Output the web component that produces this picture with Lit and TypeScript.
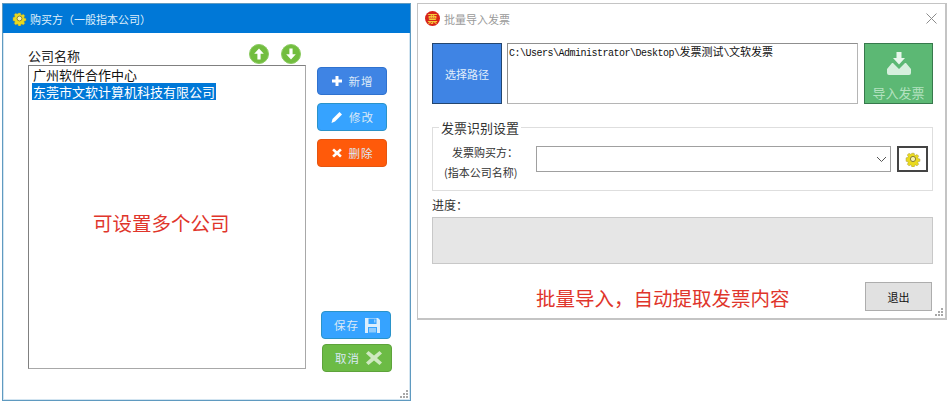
import { LitElement, html, css } from "lit";
import { customElement } from "lit/decorators.js";

const gear = (s: number) => html`<svg width=${s} height=${s} viewBox="0 0 16 16"><path fill="#eada1e" stroke="#a89a3c" stroke-width=".6" d="M6.600 1h2.800l.4 2 1.300.6 1.800-1.100 2 2-1.100 1.800.6 1.300 2 .4v2.800l-2 .4-.6 1.300 1.100 1.800-2 2-1.800-1.100-1.300.6-.4 2H6.600l-.4-2-1.300-.6-1.800 1.100-2-2 1.100-1.800-.6-1.300-2-.4V6.600l2-.4.6-1.300L1.100 3.100l2-2 1.800 1.100 1.300-.6z" transform="translate(1.400 1.400) scale(.825)"/><circle cx="8" cy="8" r="2.600" fill="#f8f3b0" stroke="#7d7430" stroke-width=".9"/></svg>`;

const arrow = (down: boolean) => html`<svg class="round" width="20" height="20" viewBox="0 0 20 20"><circle cx="10" cy="10" r="9.500" fill="#72bd3f" stroke="#8ccb62"/><path fill="#fff" transform=${down ? "rotate(180 10 10)" : ""} d="M10 4.500 14.800 9.800H11.600V15.500H8.400V9.800H5.200z"/></svg>`;

@customElement("app-root")
export class AppRoot extends LitElement {
  static styles = css`
    :host { display: block; position: relative; width: 950px; height: 402px; background: #fff; overflow: hidden;
      font-family: "Noto Sans CJK SC", "Liberation Sans", sans-serif; color: #222; }
    .win { position: absolute; box-sizing: border-box; display: flex; flex-direction: column; background: #fff; }
    .w1 { left: 2px; top: 3px; width: 409px; height: 398px; border: 1px solid #5f9ac0; box-shadow: inset 1px 0 0 #d3e5f1, inset -1px 0 0 #d3e5f1, inset 0 -1px 0 #d3e5f1; }
    .w2 { left: 417px; top: 3px; width: 530px; height: 317px; border: 2px solid #c4c4c4; border-width: 1px 2px 2px 1px; }
    .bar { height: 29px; flex: none; display: flex; align-items: center; font-size: 11px; }
    .w1 .bar { background: #0078d7; color: #dfeefa; padding-left: 9px; gap: 3px; }
    .w2 .bar { color: #9a9a9a; padding-left: 7px; gap: 4px; position: relative; }
    .stamp { width: 15px; height: 15px; border-radius: 50%; background: #d8231a; color: #f6c93c; font-size: 10px; line-height: 15px; text-align: center; font-weight: 700; }
    .close { margin-left: auto; margin-right: 8px; display: flex; }
    .grip { position: absolute; right: 1px; bottom: 1px; display: flex; }

    .b1 { flex: 1; display: flex; padding: 13px 0 31px 25px; position: relative; }
    .left { width: 278px; display: flex; flex-direction: column; flex: none; }
    .lhead { height: 19px; flex: none; display: flex; align-items: center; position: relative; font-size: 13px; color: #222; }
    .arrows { position: absolute; left: 221px; top: -2px; display: flex; gap: 12px; }
    .round { display: block; }
    .list { flex: 1; box-sizing: border-box; border: 1px solid #808080; border-right-color: #a8a8a8; border-bottom-color: #a8a8a8; padding: 0 0 0 3px; font-size: 13px; line-height: 17px; color: #111; }
    .list div { width: max-content; padding: 0 1px; }
    .sel { background: #0078d7; color: #fff; }
    .right { display: flex; flex-direction: column; margin-left: 11px; padding-top: 21px; }
    .btn { box-sizing: border-box; width: 70px; height: 28px; border-radius: 4px; display: flex; align-items: center; justify-content: center; gap: 6px; color: #dbe9f7; font-size: 11.500px; letter-spacing: 1px; }
    .stack { display: flex; flex-direction: column; gap: 8px; }
    .blue { background: #3f84e4; border: 1px solid #2f72cf; }
    .sky { background: #36a3ff; border: 1px solid #2a93c9; }
    .orange { background: #ff5a0a; border: 1px solid #e55510; }
    .grn { background: #6cbb45; border: 1px solid #5ea33b; }
    .bottom { margin-top: auto; gap: 5px; margin-bottom: -3px; }
    .bottom .btn { gap: 5px; font-size: 11.500px; justify-content: flex-start; padding-left: 12px; }
    .save { margin-left: 4px; }
    .cancel { margin-left: 5px; }

    .note { position: absolute; color: #e0352b; font-size: 19.500px; line-height: 24px; white-space: nowrap; }
    .n1 { left: 90px; top: 178px; }
    .n2 { left: 118px; top: 253px; }

    .b2 { flex: 1; display: flex; flex-direction: column; padding: 10px 12px 0 14px; position: relative; }
    .top { display: flex; height: 61px; flex: none; }
    .choose { width: 70px; box-sizing: border-box; background: #3f84e4; border: 1px solid #24466f; color: #e3effb; font-size: 11px; display: flex; align-items: center; justify-content: center; }
    .path { flex: 1; margin: 0 6px 0 5px; box-sizing: border-box; border: 1px solid #8f8f8f; border-bottom-color: #b5b5b5; border-right-color: #b5b5b5; padding: 0 1px; font: 10px/14px "Liberation Mono", monospace; letter-spacing: -.5px; color: #111; white-space: nowrap; }
    .path span { font: 11px/14px "Noto Sans CJK SC", sans-serif; letter-spacing: 0; }
    .imp { width: 69px; box-sizing: border-box; background: #5cb874; border: 1px solid #37794c; color: #b4e2c0; font-size: 13px; line-height: 18px; display: flex; flex-direction: column; align-items: center; padding-top: 8px; gap: 9px; }
    .imp svg { display: block; }
    .group { margin-top: 23px; height: 64px; flex: none; box-sizing: border-box; border: 1px solid #dedede; position: relative; display: grid; grid-template-columns: 84px 355px auto; column-gap: 19px; align-items: start; padding-top: 18px; width: 501px; }
    .legend { position: absolute; left: 6px; top: -9px; background: #fff; padding: 0 2px; font-size: 13px; line-height: 18px; color: #333; }
    .labs { display: flex; flex-direction: column; gap: 4px; margin-top: -2px; font-size: 11px; line-height: 16px; color: #333; white-space: nowrap; }
    .lab1 { margin-left: 19px; }
    .lab2 { margin-left: 11px; }
    .combo { box-sizing: border-box; height: 26px; border: 1px solid #a0a0a0; display: flex; align-items: center; justify-content: flex-end; padding-right: 3px; }
    .gearbtn { box-sizing: border-box; width: 31px; height: 26px; border: 2px solid #444; margin-left: -13px; display: flex; align-items: center; justify-content: center; }
    .prog-l { font-size: 12px; line-height: 16px; margin-top: 6px; color: #333; }
    .prog { margin-top: 4px; height: 47px; flex: none; width: 501px; box-sizing: border-box; background: #e6e6e6; border: 1px solid #c8c8c8; }
    .foot { display: flex; justify-content: flex-end; margin-top: 18px; padding-right: 1px; }
    .exit { box-sizing: border-box; width: 67px; height: 29px; background: #e1e1e1; border: 1px solid #adadad; font-size: 11px; display: flex; align-items: center; justify-content: center; color: #111; }
  `;

  private grip() {
    return html`<svg class="grip" width="10" height="10" viewBox="0 0 10 10"><path fill="#a8a8a8" d="M7 1h2v2H7zM4 4h2v2H4zM7 4h2v2H7zM1 7h2v2H1zM4 7h2v2H4zM7 7h2v2H7z"/></svg>`;
  }

  render() {
    return html`
      <section class="win w1">
        <header class="bar">${gear(15)}<span>购买方（一般指本公司）</span></header>
        <div class="b1">
          <div class="left">
            <div class="lhead"><span>公司名称</span><div class="arrows">${arrow(false)}${arrow(true)}</div></div>
            <div class="list"><div>广州软件合作中心</div><div class="sel">东莞市文软计算机科技有限公司</div></div>
          </div>
          <div class="right">
            <div class="stack">
              <div class="btn blue"><svg width="12" height="12" viewBox="0 0 12 12"><path fill="#fff" d="M4.500 1h3v3.500H11v3H7.500V11h-3V7.500H1v-3h3.500z"/></svg><span>新增</span></div>
              <div class="btn sky"><svg width="13" height="13" viewBox="0 0 13 13"><path fill="#fff" d="M9.500 1 12 3.500 5 10.500 1.500 12 2.500 8z"/></svg><span>修改</span></div>
              <div class="btn orange"><svg width="12" height="12" viewBox="0 0 12 12"><path fill="#fff" d="M3 1.500 6 4.300 9 1.500 10.800 3.300 8 6l2.800 2.700L9 10.500 6 7.700 3 10.500 1.200 8.700 4 6 1.200 3.300z"/></svg><span>删除</span></div>
            </div>
            <div class="stack bottom">
              <div class="btn sky save"><span>保存</span><svg width="17" height="17" viewBox="0 0 17 17"><path fill="#dceefc" d="M1 1h13l2 2v13H1zM4.500 1.500v5.500h8V1.500zM4 10v6h9v-6z"/><path fill="#dceefc" d="M10 2.500h1.500v3H10zM5 11h7v4.500H5z" opacity=".55"/></svg></div>
              <div class="btn grn cancel"><span>取消</span><svg width="18" height="16" viewBox="0 0 18 16"><path fill="#cfe9c0" d="M3.500 1 9 5.500 14.500 1 17 3.500 12 8l5 4.500-2.500 2.500L9 10.500 3.500 15 1 12.500 6 8 1 3.500z"/></svg></div>
            </div>
          </div>
          <div class="note n1">可设置多个公司</div>
        </div>
        ${this.grip()}
      </section>

      <section class="win w2">
        <header class="bar"><span class="stamp">票</span><span>批量导入发票</span>
          <span class="close"><svg width="11" height="11" viewBox="0 0 11 11"><path stroke="#8c8c8c" fill="none" d="M.5.500l10 10M10.500.500l-10 10"/></svg></span></header>
        <div class="b2">
          <div class="top">
            <div class="choose">选择路径</div>
            <div class="path">C:\\Users\\Administrator\\Desktop\\<span>发票测试</span>\\<span>文软发票</span></div>
            <div class="imp"><svg width="24" height="23" viewBox="0 0 24 23"><path fill="#e8f6ec" d="M9.500 0h5v6h3.500l-6 6.500L6 6h3.500z"/><path fill="#d6efdd" d="M5 11 0 17v4a2 2 0 0 0 2 2h20a2 2 0 0 0 2-2v-4l-5-6h-1L12 17 6 11z"/></svg><span>导入发票</span></div>
          </div>
          <div class="group">
            <div class="legend">发票识别设置</div>
            <div class="labs"><div class="lab1">发票购买方：</div><div class="lab2">(指本公司名称)</div></div>
            <div class="combo"><svg width="11" height="7" viewBox="0 0 11 7"><path fill="none" stroke="#555" d="M1 1l4.500 4.500L10 1"/></svg></div>
            <div class="gearbtn">${gear(16)}</div>
          </div>
          <div class="prog-l">进度：</div>
          <div class="prog"></div>
          <div class="foot"><div class="exit">退出</div></div>
          <div class="note n2">批量导入，自动提取发票内容</div>
        </div>
        ${this.grip()}
      </section>
    `;
  }
}
